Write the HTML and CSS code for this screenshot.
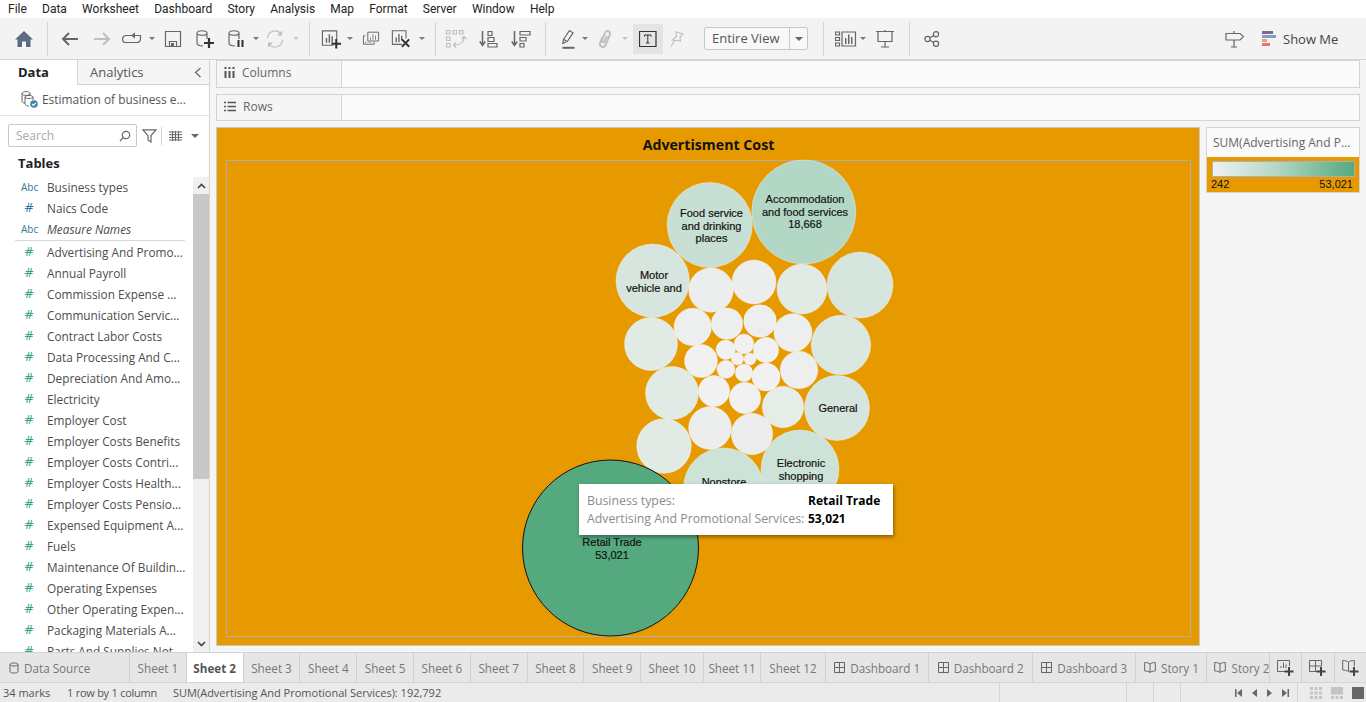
FILE: index.html
```html
<!DOCTYPE html>
<html lang="en">
<head>
    <meta charset="UTF-8">
    <title>Tableau - Sheet 2</title>
    <link rel="stylesheet" href="styles.css">
</head>
<body>
<div class="app">
    <nav class="menubar">
        <span>File</span><span>Data</span><span>Worksheet</span><span>Dashboard</span><span>Story</span><span>Analysis</span><span>Map</span><span>Format</span><span>Server</span><span>Window</span><span>Help</span>
    </nav>

    <div class="toolbar">
        <div class="tool"><svg width="20" height="18" viewBox="0 0 20 18"><path class="home" d="M10 1 L19 9.5 H16.5 V17 H12 V11.5 H8 V17 H3.5 V9.5 H1 Z"/></svg></div>
        <div class="tool"><i class="sep"></i></div>
        <div class="tool"><svg width="20" height="16" viewBox="0 0 20 16"><path class="ln2" d="M18 8 H3 M9 2 L3 8 L9 14"/></svg></div>
        <div class="tool"><svg width="20" height="16" viewBox="0 0 20 16"><path class="ln2 off" d="M2 8 H17 M11 2 L17 8 L11 14"/></svg></div>
        <div class="tool"><svg width="20" height="14" viewBox="0 0 20 14"><path class="ln" d="M10 3.5 H4 A3.5 3.5 0 0 0 4 10.5 H15 A3.5 3.5 0 0 0 18.5 7 V3.5 H13"/><path class="fill" d="M13 0.5 V6.5 L9 3.5 Z"/></svg></div>
        <div class="tool"><i class="caret"></i></div>
        <div class="tool"><svg width="18" height="18" viewBox="0 0 18 18"><path class="ln" d="M1.5 1.5 H16.5 V16.5 H1.5 Z M5.5 16.5 V11.5 H12.5 V16.5"/><path class="fill" d="M7 13 H10 V16 H7 Z"/></svg></div>
        <div class="tool"><svg width="20" height="20" viewBox="0 0 20 20"><path class="ln" d="M2 4 C2 1 12 1 12 4 V10 M2 4 C2 7 12 7 12 4 M2 4 V14 C2 16 5 17 8 17"/><path class="plus" d="M14 9 V19 M9 14 H19"/></svg></div>
        <div class="tool"><svg width="20" height="20" viewBox="0 0 20 20"><path class="ln" d="M2 4 C2 1 12 1 12 4 V10 M2 4 C2 7 12 7 12 4 M2 4 V14 C2 16 5 17 8 17"/><path class="bars" d="M11.5 11 V18 M15.5 11 V18"/></svg></div>
        <div class="tool"><i class="caret"></i></div>
        <div class="tool"><svg width="20" height="20" viewBox="0 0 20 20"><path class="ln off" d="M2.5 9 A7.5 7.5 0 0 1 16 5 M17.5 11 A7.5 7.5 0 0 1 4 15"/><path class="fill off" d="M17 1.5 V6.5 H12 Z M3 18.5 V13.5 H8 Z"/></svg></div>
        <div class="tool"><i class="caret off"></i></div>
        <div class="tool"><i class="sep"></i></div>
        <div class="tool tool-nudge"><svg width="21" height="20" viewBox="0 0 22 20"><path class="ln" d="M13 16.5 H1.5 V1.5 H16.5 V10"/><path class="fill" d="M5 9 H6.5 V14 H5 Z M8 5 H9.5 V14 H8 Z M11 7 H12.5 V14 H11 Z"/><path class="plus" d="M16 10 V20 M11 15 H21"/></svg></div>
        <div class="tool"><i class="caret"></i></div>
        <div class="tool"><svg width="18" height="16" viewBox="0 0 22 20"><path class="ln" d="M7 1.5 H20.5 V12.5 H7 Z M4 6 H1.5 V16.5 H15 V14"/><path class="fill" d="M10 8 H11 V11 H10 Z M13 4 H14 V11 H13 Z M16 6 H17 V11 H16 Z M4 13 H5 V15 H4 Z M7 14 H8 V15 H7 Z M10 14 H11 V15 H10 Z"/></svg></div>
        <div class="tool"><svg width="20" height="19" viewBox="0 0 22 20"><path class="ln" d="M12 16.5 H1.5 V1.5 H16.5 V10"/><path class="fill" d="M5 9 H6.5 V14 H5 Z M8 5 H9.5 V14 H8 Z M11 7 H12.5 V12 H11 Z"/><path class="cross" d="M12 11 L20 19 M20 11 L12 19"/></svg></div>
        <div class="tool"><i class="caret"></i></div>
        <div class="tool"><i class="sep"></i></div>
        <div class="tool"><svg width="22" height="20" viewBox="0 0 22 20"><path class="ln off" d="M1.5 1.5 H5 V5 H1.5 Z M8 1.5 H11.5 V5 H8 Z M14.5 1.5 H18 V5 H14.5 Z M1.5 8 H5 V11.5 H1.5 Z M1.5 14.5 H5 V18 H1.5 Z M19 8 C19 13 15 16 9 16 M11 13.5 L8.5 16 L11 18.5 M16.5 10 L19 7.5 L21.5 10"/></svg></div>
        <div class="tool"><svg width="20" height="18" viewBox="0 0 20 18"><path class="ln2 thin" d="M3.5 1 V15 M0.8 11.5 L3.5 15.5 L6.2 11.5"/><path class="ln" d="M9 1.5 H13 V5.5 H9 Z M9 7.5 H15 V11.5 H9 Z M9 13.5 H18 V17 H9 Z"/></svg></div>
        <div class="tool"><svg width="20" height="18" viewBox="0 0 20 18"><path class="ln2 thin" d="M3.5 1 V15 M0.8 11.5 L3.5 15.5 L6.2 11.5"/><path class="ln" d="M9 1.5 H19 V5 H9 Z M9 7.5 H15 V11 H9 Z M9 13.5 H13 V17 H9 Z"/></svg></div>
        <div class="tool"><i class="sep"></i></div>
        <div class="tool"><svg width="14" height="20" viewBox="0 0 14 20"><path class="ln" d="M5 13 L1.8 14.5 L2.5 10.5 L8.5 1.5 L12 3.8 L6 13 M3 10.5 L6 12.5"/><path class="fill" d="M1.5 17.8 H13.5 V19.8 H1.5 Z"/></svg></div>
        <div class="tool"><i class="caret"></i></div>
        <div class="tool"><svg width="14" height="20" viewBox="0 0 14 20"><path class="ln2 off" d="M4.5 8 L2 14 C1 18 6 19.5 7.5 16 L11.8 6 C13 2 8.5 0.5 7 4 L4 11.5 C3.5 13.5 5.5 14 6.5 12.5 L9 7"/></svg></div>
        <div class="tool"><i class="caret off"></i></div>
        <div></div>
        <div class="tool tool-on"><svg width="18" height="16" viewBox="0 0 18 16"><path class="box" d="M0.5 0.5 H17 V15.5 H0.5 Z"/><path class="tee" d="M5.5 5.5 V4 H12 V5.5 M8.8 4 V12 M7 12 H10.5"/></svg></div>
        <div class="tool"><svg width="14" height="16" viewBox="0 0 14 16"><path class="ln off" d="M6 0.8 L13 3 L10 6 L10.5 10 L2.5 9 L6.5 5.5 Z M4.5 9.5 L1 15.5"/></svg></div>
        <div></div>
        <div class="fit-select"><span class="fit-text">Entire View</span><span class="fit-arrow"><i class="caret dark"></i></span></div>
        <div class="tool"><i class="sep"></i></div>
        <div class="tool"><svg width="22" height="16" viewBox="0 0 22 16"><path class="ln" d="M0.5 1 H4.5 V4 H0.5 Z M0.5 6.5 H4.5 V9.5 H0.5 Z M0.5 12 H4.5 V15 H0.5 Z M7 1 H20.5 V15 H7 Z"/><path class="fill" d="M10 7 H11.5 V13 H10 Z M13 3.5 H14.5 V13 H13 Z M16 6 H17.5 V13 H16 Z"/></svg></div>
        <div class="tool"><i class="caret"></i></div>
        <div class="tool"><svg width="20" height="18" viewBox="0 0 20 18"><path class="ln" d="M1 1.5 H19 M3 1.5 V11.5 H17 V1.5 M10 0 V1.5 M10 11.5 V17 M6 17 H14"/></svg></div>
        <div class="tool"><i class="sep"></i></div>
        <div class="tool"><svg width="16" height="16" viewBox="0 0 16 16"><circle class="ln" cx="3.5" cy="8" r="2.6"/><circle class="ln" cx="12" cy="3.2" r="2.6"/><circle class="ln" cx="12" cy="12.8" r="2.6"/><path class="ln" d="M5.8 6.8 L9.7 4.5 M5.8 9.2 L9.7 11.5"/></svg></div>
        <div></div>
        <div class="tool"><svg width="20" height="18" viewBox="0 0 20 18"><path class="ln" d="M1 3.5 H15 L18.5 6.5 L15 10 H1 Z M9 3.5 V1 M9 10 V17 M6 17 H12"/></svg></div>
        <div class="show-me">
            <svg width="15" height="16" viewBox="0 0 15 16"><rect class="sm-1" x="0" y="0" width="11" height="3"/><rect class="sm-2" x="0" y="4" width="14" height="3"/><rect class="sm-3" x="0" y="8" width="5" height="3"/><rect class="sm-4" x="0" y="12" width="8" height="3"/></svg>
            <span>Show Me</span>
        </div>
    </div>

    <div class="main">
        <aside class="side">
            <div class="side-tabs">
                <div class="side-tab side-tab-on">Data</div>
                <div class="side-tab">Analytics<svg class="side-close" width="8" height="11" viewBox="0 0 8 11"><path class="ln" d="M6.5 1 L1.5 5.5 L6.5 10"/></svg></div>
            </div>
            <div class="source">
                <svg width="18" height="18" viewBox="0 0 18 18"><path class="ln thin-ln" d="M2 3.5 C2 1 10 1 10 3.5 V6 M2 3.5 C2 6 10 6 10 3.5 M2 3.5 V11 C2 12 3 13 5 13.2 M5 7 C5 5 13 5 13 7 V10 M5 7 C5 9 13 9 13 7 M5 7 V13.5 C5 15 7 16 9 16"/><circle class="check" cx="14" cy="14" r="3.8"/><path class="tick" d="M12.2 14 L13.5 15.3 L15.8 12.8"/></svg>
                <span>Estimation of business e...</span>
            </div>
            <div class="search-row">
                <div class="search"><span>Search</span><svg width="12" height="12" viewBox="0 0 12 12"><circle class="ln" cx="7" cy="5" r="3.7"/><path class="ln" d="M4.3 7.7 L1 11"/></svg></div>
                <svg class="filter" width="15" height="14" viewBox="0 0 15 14"><path class="ln" d="M0.8 0.8 H14 L9 6.5 V13 L6 11 V6.5 Z"/></svg>
                <i class="sep sep-small"></i>
                <svg width="13" height="10" viewBox="0 0 13 10"><path class="dash" d="M0 1 H13 M0 3.7 H13 M0 6.4 H13 M0 9 H13 M3.5 0 V10 M6.5 0 V10 M9.5 0 V10"/></svg>
                <i class="caret dark caret-list"></i>
            </div>
            <h3 class="tables">Tables</h3>
            <div class="fields">
                <ul class="field-list">
                    <li class="dim"><b>Abc</b>Business types</li>
                    <li class="dim"><b class="num">#</b>Naics Code</li>
                    <li class="dim last-dim"><b>Abc</b><em>Measure Names</em></li>
                    <li class="mea"><b class="num">#</b>Advertising And Promo...</li>
                    <li class="mea"><b class="num">#</b>Annual Payroll</li>
                    <li class="mea"><b class="num">#</b>Commission Expense ...</li>
                    <li class="mea"><b class="num">#</b>Communication Servic...</li>
                    <li class="mea"><b class="num">#</b>Contract Labor Costs</li>
                    <li class="mea"><b class="num">#</b>Data Processing And C...</li>
                    <li class="mea"><b class="num">#</b>Depreciation And Amo...</li>
                    <li class="mea"><b class="num">#</b>Electricity</li>
                    <li class="mea"><b class="num">#</b>Employer Cost</li>
                    <li class="mea"><b class="num">#</b>Employer Costs Benefits</li>
                    <li class="mea"><b class="num">#</b>Employer Costs Contri...</li>
                    <li class="mea"><b class="num">#</b>Employer Costs Health...</li>
                    <li class="mea"><b class="num">#</b>Employer Costs Pensio...</li>
                    <li class="mea"><b class="num">#</b>Expensed Equipment A...</li>
                    <li class="mea"><b class="num">#</b>Fuels</li>
                    <li class="mea"><b class="num">#</b>Maintenance Of Buildin...</li>
                    <li class="mea"><b class="num">#</b>Operating Expenses</li>
                    <li class="mea"><b class="num">#</b>Other Operating Expen...</li>
                    <li class="mea"><b class="num">#</b>Packaging Materials A...</li>
                    <li class="mea"><b class="num">#</b>Parts And Supplies Not...</li>
                </ul>
                <div class="scrollbar">
                    <div class="scroll-btn"><svg width="9" height="6" viewBox="0 0 9 6"><path class="chev" d="M1 5 L4.5 1.5 L8 5"/></svg></div>
                    <div class="scroll-thumb"></div>
                    <div class="scroll-btn scroll-btn-end"><svg width="9" height="6" viewBox="0 0 9 6"><path class="chev" d="M1 1 L4.5 4.5 L8 1"/></svg></div>
                </div>
            </div>
        </aside>

        <section class="content">
            <div class="shelf">
                <div class="shelf-label"><svg width="11" height="11" viewBox="0 0 11 11"><path class="shelf-ico" d="M1.5 0 V2 M1.5 4 V11 M5.5 0 V2 M5.5 4 V11 M9.5 0 V2 M9.5 4 V11"/></svg>Columns</div>
            </div>
            <div class="shelf">
                <div class="shelf-label"><svg width="12" height="11" viewBox="0 0 12 11"><path class="shelf-ico thin-ico" d="M0 1.5 H2 M3.5 1.5 H12 M0 5.5 H2 M3.5 5.5 H12 M0 9.5 H2 M3.5 9.5 H12"/></svg>Rows</div>
            </div>
            <div class="view-row">
                <div class="worksheet">
                    <h2 class="ws-title">Advertisment Cost</h2>
                    <div class="pane">
                        <svg class="bubbles" viewBox="227 161 963 475">
                            <circle class="s1" cx="803.8" cy="212" r="52"/>
                            <circle class="s2" cx="709.7" cy="225" r="42.6"/>
                            <circle class="s4" cx="652.7" cy="280.7" r="36.7"/>
                            <circle class="s8" cx="711" cy="290" r="22.3"/>
                            <circle class="s8" cx="754" cy="282" r="22"/>
                            <circle class="s6" cx="802" cy="289" r="25"/>
                            <circle class="s4" cx="860" cy="285" r="33"/>
                            <circle class="s6" cx="651" cy="344" r="26.5"/>
                            <circle class="s9" cx="692.7" cy="327" r="18.7"/>
                            <circle class="s9" cx="727" cy="323.7" r="15.7"/>
                            <circle class="s9" cx="760" cy="321" r="16.3"/>
                            <circle class="s9" cx="793" cy="332.7" r="19"/>
                            <circle class="s5" cx="841" cy="345" r="29.7"/>
                            <circle class="s10" cx="725.7" cy="349.7" r="9.7"/>
                            <circle class="s10" cx="744" cy="344" r="10"/>
                            <circle class="s10" cx="766" cy="350" r="12.7"/>
                            <circle class="s10" cx="737.5" cy="358.8" r="6.2"/>
                            <circle class="s10" cx="750" cy="359" r="6"/>
                            <circle class="s10" cx="726" cy="369.3" r="9"/>
                            <circle class="s10" cx="744" cy="372.8" r="8.8"/>
                            <circle class="s10" cx="766" cy="377" r="14"/>
                            <circle class="s10" cx="701" cy="361" r="16.5"/>
                            <circle class="s9" cx="799" cy="370" r="18.8"/>
                            <circle class="s6" cx="672" cy="393" r="26.5"/>
                            <circle class="s10" cx="714" cy="391" r="15.6"/>
                            <circle class="s10" cx="745" cy="398" r="15.7"/>
                            <circle class="s7" cx="783" cy="407" r="20.7"/>
                            <circle class="s4" cx="837" cy="408" r="32.5"/>
                            <circle class="s8" cx="710" cy="428" r="21.4"/>
                            <circle class="s8" cx="752" cy="434" r="20.7"/>
                            <circle class="s6" cx="664" cy="446" r="27.3"/>
                            <circle class="s3" cx="723.5" cy="488" r="40"/>
                            <circle class="s3" cx="800" cy="469" r="39"/>
                            <circle class="s0" cx="610.5" cy="548" r="88"/>
                            <text x="805" y="203">Accommodation</text>
                            <text x="805" y="216">and food services</text>
                            <text x="805" y="228">18,668</text>
                            <text x="711.5" y="217">Food service</text>
                            <text x="711.5" y="230">and drinking</text>
                            <text x="711.5" y="242">places</text>
                            <text x="654" y="279">Motor</text>
                            <text x="654" y="292">vehicle and</text>
                            <text x="838" y="412">General</text>
                            <text x="724" y="486">Nonstore</text>
                            <text x="801" y="467">Electronic</text>
                            <text x="801" y="480">shopping</text>
                            <text x="612" y="546">Retail Trade</text>
                            <text x="612" y="559">53,021</text>
                        </svg>
                    </div>
                    <div class="tooltip">
                        <span class="tip-key">Business types:</span><span class="tip-val">Retail Trade</span>
                        <span class="tip-key">Advertising And Promotional Services:</span><span class="tip-val">53,021</span>
                    </div>
                </div>
                <div class="legend">
                    <div class="legend-title">SUM(Advertising And P...</div>
                    <div class="legend-body">
                        <div class="legend-ramp"></div>
                        <div class="legend-scale"><span>242</span><span>53,021</span></div>
                    </div>
                </div>
            </div>
        </section>
    </div>

    <div class="tabs">
        <div class="tab tab-source"><svg width="10" height="12" viewBox="0 0 10 12"><path class="tab-ln" d="M1 2.5 C1 0.5 9 0.5 9 2.5 V9.5 C9 11.5 1 11.5 1 9.5 Z M1 2.5 C1 4.5 9 4.5 9 2.5"/></svg>Data Source</div>
        <div class="tab">Sheet 1</div>
        <div class="tab tab-on">Sheet 2</div>
        <div class="tab">Sheet 3</div>
        <div class="tab">Sheet 4</div>
        <div class="tab">Sheet 5</div>
        <div class="tab">Sheet 6</div>
        <div class="tab">Sheet 7</div>
        <div class="tab">Sheet 8</div>
        <div class="tab">Sheet 9</div>
        <div class="tab tab-two">Sheet 10</div>
        <div class="tab">Sheet 11</div>
        <div class="tab tab-twelve">Sheet 12</div>
        <div class="tab tab-dash"><svg width="11" height="11" viewBox="0 0 11 11"><path class="tab-ln" d="M0.5 0.5 H10.5 V10.5 H0.5 Z M5.5 0.5 V10.5 M0.5 5.5 H10.5"/></svg>Dashboard 1</div>
        <div class="tab tab-dash"><svg width="11" height="11" viewBox="0 0 11 11"><path class="tab-ln" d="M0.5 0.5 H10.5 V10.5 H0.5 Z M5.5 0.5 V10.5 M0.5 5.5 H10.5"/></svg>Dashboard 2</div>
        <div class="tab tab-dash"><svg width="11" height="11" viewBox="0 0 11 11"><path class="tab-ln" d="M0.5 0.5 H10.5 V10.5 H0.5 Z M5.5 0.5 V10.5 M0.5 5.5 H10.5"/></svg>Dashboard 3</div>
        <div class="tab tab-story"><svg width="12" height="11" viewBox="0 0 12 11"><path class="tab-ln" d="M6 2 C5 1 3 0.5 0.7 0.5 V9 C3 9 5 9.5 6 10.5 C7 9.5 9 9 11.3 9 V0.5 C9 0.5 7 1 6 2 Z M6 2 V10.5"/></svg>Story 1</div>
        <div class="tab tab-story tab-cut"><svg width="12" height="11" viewBox="0 0 12 11"><path class="tab-ln" d="M6 2 C5 1 3 0.5 0.7 0.5 V9 C3 9 5 9.5 6 10.5 C7 9.5 9 9 11.3 9 V0.5 C9 0.5 7 1 6 2 Z M6 2 V10.5"/></svg>Story 2</div>
        <div class="tab-add"><svg width="17" height="16" viewBox="0 0 17 16"><path class="tab-ln" d="M9 11.5 H0.5 V0.5 H12.5 V6"/><path class="tab-ln" d="M4 8 V6 M6.5 8 V2.5 M9 8 V4.5"/><path class="tab-plus" d="M12 7 V16 M7.5 11.5 H16.5"/></svg></div>
        <div class="tab-add"><svg width="17" height="16" viewBox="0 0 17 16"><path class="tab-ln" d="M9 11.5 H0.5 V0.5 H12.5 V6 M6.5 0.5 V11.5 M0.5 6 H12.5"/><path class="tab-plus" d="M12 7 V16 M7.5 11.5 H16.5"/></svg></div>
        <div class="tab-add"><svg width="17" height="16" viewBox="0 0 17 16"><path class="tab-ln" d="M6.5 2 C5 1 3 0.5 0.7 0.5 V10 C3 10 5 10.5 6.5 11.5 M6.5 2 C8 1 10 0.5 12.3 0.5 V6 M6.5 2 V11.5"/><path class="tab-plus" d="M12 7 V16 M7.5 11.5 H16.5"/></svg></div>
    </div>

    <footer class="status">
        <span class="st-marks">34 marks</span>
        <span class="st-rows">1 row by 1 column</span>
        <span class="st-sum">SUM(Advertising And Promotional Services): 192,792</span>
        <span class="st-cell st-a"></span>
        <span class="st-cell st-b"></span>
        <span class="st-cell st-c"></span>
        <span class="st-cell st-d"></span>
        <div class="st-nav">
            <svg width="7" height="8" viewBox="0 0 7 8"><path class="nav" d="M0 0 H1.5 V8 H0 Z M7 0 V8 L2 4 Z"/></svg>
            <svg width="5" height="8" viewBox="0 0 5 8"><path class="nav" d="M5 0 V8 L0 4 Z"/></svg>
            <svg width="5" height="8" viewBox="0 0 5 8"><path class="nav" d="M0 0 V8 L5 4 Z"/></svg>
            <svg width="7" height="8" viewBox="0 0 7 8"><path class="nav" d="M5.5 0 H7 V8 H5.5 Z M0 0 V8 L5 4 Z"/></svg>
        </div>
        <div class="st-views">
            <svg width="12" height="12" viewBox="0 0 12 12"><path class="view-grid" d="M0 0 H3 V3 H0 Z M4.5 0 H7.5 V3 H4.5 Z M9 0 H12 V3 H9 Z M0 4.5 H3 V7.5 H0 Z M4.5 4.5 H7.5 V7.5 H4.5 Z M9 4.5 H12 V7.5 H9 Z M0 9 H3 V12 H0 Z M4.5 9 H7.5 V12 H4.5 Z M9 9 H12 V12 H9 Z"/></svg>
            <svg width="12" height="12" viewBox="0 0 12 12"><path class="view-grid" d="M0 0 H12 V7.5 H0 Z M0 9 H3 V12 H0 Z M4.5 9 H7.5 V12 H4.5 Z M9 9 H12 V12 H9 Z"/></svg>
            <svg width="12" height="12" viewBox="0 0 12 12"><path class="view-full" d="M0 0 H12 V12 H0 Z"/></svg>
        </div>
    </footer>
</div>
</body>
</html>
```

FILE: styles.css
```css
* {
  box-sizing: border-box;
}

html, body {
  margin: 0;
  height: 100%;
  overflow: hidden;
}

body {
  font-family: "Open Sans", "Liberation Sans", sans-serif;
  font-size: 12px;
  color: #555;
  background-color: #f5f5f5;
}

.app {
  display: flex;
  flex-direction: column;
  width: 1366px;
  height: 702px;
}

/* menu */
.menubar {
  display: flex;
  align-items: center;
  gap: 15.2px;
  height: 18px;
  padding-left: 8px;
  background-color: #fff;
  color: #222;
  font-family: Roboto, "Liberation Sans", sans-serif;
  font-size: 12px;
}

/* toolbar */
.toolbar {
  display: grid;
  grid-template-columns: 32px 14px 32px 32px 28px 12px 30px 34px 30px 8px 30px 12px 14px 28px 12px 30px 30px 12px 14px 28px 38px 26px 22px 24px 10px 30px 10px 3px 30px 28px 13px 104px 30px 16px 18px 26px 22px 24px 1fr 44px 109px;
  align-items: center;
  height: 42px;
  padding-left: 8px;
  background-color: #f3f3f3;
  border-bottom: 1px solid #d4d4d4;
}

.tool {
  display: flex;
  align-items: center;
  justify-content: center;
  height: 30px;
}

.tool-on {
  background-color: #e4e4e4;
}

.tool-nudge {
  padding-left: 2px;
}

.sep {
  display: block;
  width: 1px;
  height: 34px;
  background-color: #d4d4d4;
}

.caret {
  display: block;
  width: 0;
  height: 0;
  border-left: 3px solid transparent;
  border-right: 3px solid transparent;
  border-top: 3px solid #777;
}

.caret.off {
  border-top-color: #c4c4c4;
}

.caret.dark {
  border-left-width: 4px;
  border-right-width: 4px;
  border-top-width: 4px;
  border-top-color: #666;
}

svg {
  display: block;
  flex: none;
}

.ln, .ln2, .box, .tee, .plus, .bars, .cross, .dash, .chev, .shelf-ico, .tab-ln, .tab-plus {
  fill: none;
}

.ln {
  stroke: #666;
  stroke-width: 1.2;
}

.ln2 {
  stroke: #666;
  stroke-width: 2;
}

.ln2.thin {
  stroke-width: 1.5;
}

.ln.thin-ln {
  stroke-width: 1;
}

.ln.off, .ln2.off {
  stroke: #c0c0c0;
}

.fill {
  fill: #666;
}

.fill.off {
  fill: #c0c0c0;
}

.home {
  fill: #5d6b7e;
}

.plus {
  stroke: #333;
  stroke-width: 2.2;
}

.bars {
  stroke: #333;
  stroke-width: 2;
}

.cross {
  stroke: #333;
  stroke-width: 2.2;
}

.box {
  stroke: #333;
  stroke-width: 1.2;
}

.tee {
  stroke: #333;
  stroke-width: 1;
}

.fit-select {
  display: flex;
  height: 23px;
  background-color: #f8f8f8;
  border: 1px solid #c8c8c8;
  border-radius: 2px;
  font-size: 13px;
  color: #555;
}

.fit-text {
  flex: 1;
  padding-left: 7px;
  line-height: 20px;
}

.fit-arrow {
  display: flex;
  align-items: center;
  justify-content: center;
  width: 18px;
  border-left: 1px solid #c8c8c8;
}

.show-me {
  display: flex;
  align-items: center;
  gap: 6px;
  padding-left: 5px;
  font-size: 13px;
  color: #444;
}

.sm-1 { fill: #7b6a94; }
.sm-2 { fill: #7f9fc6; }
.sm-3 { fill: #eda36f; }
.sm-4 { fill: #ee7183; }

/* main area */
.main {
  display: flex;
  flex: 1;
  min-height: 0;
}

.side {
  display: flex;
  flex-direction: column;
  flex: none;
  width: 210px;
  background-color: #fff;
  border-right: 1px solid #d4d4d4;
}

.side-tabs {
  display: flex;
  flex: none;
  height: 25px;
}

.side-tab {
  position: relative;
  flex: 1;
  padding-left: 12px;
  line-height: 24px;
  font-size: 13px;
  color: #555;
  background-color: #f5f5f5;
  border-left: 1px solid #d4d4d4;
  border-bottom: 1px solid #d4d4d4;
}

.side-tab-on {
  flex: none;
  width: 77px;
  padding-left: 18px;
  font-weight: 700;
  color: #222;
  background-color: #fff;
  border: none;
}

.side-close {
  position: absolute;
  right: 7px;
  top: 7px;
}

.source {
  display: flex;
  flex: none;
  align-items: center;
  gap: 4px;
  height: 31px;
  padding: 0 0 2px 20px;
  font-size: 11.9px;
  border-bottom: 1px solid #e4e4e4;
}

.search-row {
  display: flex;
  flex: none;
  align-items: center;
  height: 23px;
  margin-top: 8px;
  padding-left: 8px;
}

.search {
  display: flex;
  align-items: center;
  justify-content: space-between;
  width: 129px;
  height: 23px;
  padding: 0 5px 0 7px;
  border: 1px solid #c8c8c8;
  border-radius: 2px;
  color: #aaa;
}

.filter {
  margin-left: 5px;
}

.sep-small {
  height: 18px;
  margin: 0 7px 0 4px;
}

.dash {
  stroke: #666;
  stroke-width: 1;
}

.caret-list {
  margin-left: 9px;
}

.tables {
  flex: none;
  height: 20px;
  margin: 6px 0 4px 18px;
  font-size: 13px;
  line-height: 20px;
  font-weight: 700;
  color: #222;
}

.fields {
  position: relative;
  flex: 1;
  min-height: 0;
  overflow: hidden;
}

.field-list {
  margin: 0;
  padding: 0;
  list-style: none;
}

.field-list li {
  display: flex;
  align-items: center;
  height: 21px;
  padding-left: 20px;
  font-size: 11.8px;
  white-space: nowrap;
  color: #4d4d4d;
}

.field-list .dim {
  padding-bottom: 1px;
}

.field-list b {
  flex: none;
  width: 27px;
  padding-left: 1px;
  font-family: "Open Sans", "Liberation Sans", sans-serif;
  font-size: 10px;
  font-weight: 400;
  color: #2d7a9c;
}

.field-list b.num {
  padding-left: 4px;
  font-family: "DejaVu Sans", sans-serif;
  font-size: 12px;
  color: #2d7a9c;
}

.field-list .mea b.num {
  color: #35a47c;
}

.field-list .last-dim {
  box-sizing: content-box;
  height: 20px;
  margin: 0 24px 0 15px;
  padding-left: 5px;
  border-bottom: 1px solid #d8d8d8;
}

/* scrollbar overlays the end of the field list */
.scrollbar {
  position: absolute;
  top: 0;
  right: 0;
  display: flex;
  flex-direction: column;
  width: 16px;
  height: 475px;
  background-color: #f0f0f0;
}

.scroll-btn {
  display: flex;
  flex: none;
  align-items: center;
  justify-content: center;
  height: 17px;
}

.scroll-btn-end {
  margin-top: auto;
}

.chev {
  stroke: #444;
  stroke-width: 1.6;
}

.scroll-thumb {
  flex: none;
  height: 285px;
  background-color: #c8c8c8;
}

.content {
  display: flex;
  flex-direction: column;
  flex: 1;
  min-width: 0;
  padding: 0 6px 6px 6px;
}

.shelf {
  display: flex;
  flex: none;
  height: 27.5px;
  margin-bottom: 6px;
  background-color: #fafafa;
  border: 1px solid #d4d4d4;
}

.shelf-label {
  display: flex;
  align-items: center;
  gap: 7px;
  width: 125px;
  padding: 0 0 2px 7px;
  background-color: #f5f5f5;
  border-right: 1px solid #d4d4d4;
  color: #666;
}

.shelf-ico {
  stroke: #555;
  stroke-width: 2;
}

.shelf-ico.thin-ico {
  stroke-width: 1.5;
}

.view-row {
  display: flex;
  flex: 1;
  gap: 6px;
  min-height: 0;
}

.worksheet {
  position: relative;
  display: flex;
  flex-direction: column;
  flex: none;
  width: 984px;
  height: 519px;
  padding: 0 8px 8px 9px;
  background-color: #e69a00;
  border: 1px solid #c8c8c8;
}

.ws-title {
  flex: none;
  margin: 0;
  height: 32px;
  font-size: 14.2px;
  line-height: 33px;
  font-weight: 700;
  color: #111;
  text-align: center;
}

.pane {
  flex: 1;
  min-height: 0;
  border: 1px solid #aeaeae;
}

.bubbles {
  width: 100%;
  height: 100%;
  overflow: visible;
}

.bubbles circle {
  stroke: #fff;
  stroke-opacity: 0.35;
  stroke-width: 1;
}

.bubbles .s0 {
  fill: #55a97f;
  stroke: #111;
  stroke-opacity: 1;
}

.s1 { fill: #b3d7c5; }
.s2 { fill: #c8e0d4; }
.s3 { fill: #cde3d7; }
.s4 { fill: #d6e6de; }
.s5 { fill: #dbe8e1; }
.s6 { fill: #e1eae5; }
.s7 { fill: #e6ece8; }
.s8 { fill: #ebeeec; }
.s9 { fill: #edefee; }
.s10 { fill: #f0f1f0; }

.bubbles text {
  font-family: "Liberation Sans", Arial, sans-serif;
  font-size: 11px;
  fill: #111;
  stroke: #111;
  stroke-width: 0.2;
  text-anchor: middle;
}

.tooltip {
  position: absolute;
  left: 362px;
  top: 356px;
  display: grid;
  grid-template-columns: auto auto;
  column-gap: 3px;
  width: 314px;
  height: 51px;
  padding: 7.5px 12px 7px 8px;
  background-color: #fff;
  box-shadow: 1px 2px 4px rgba(0, 0, 0, 0.4);
  line-height: 18px;
}

.tip-key {
  font-size: 12.3px;
  color: #8c8c8c;
}

.tip-val {
  font-weight: 700;
  color: #000;
}

.legend {
  flex: 1;
  height: 66px;
  background-color: #fafafa;
  border: 1px solid #d4d4d4;
}

.legend-title {
  height: 29px;
  padding-left: 6px;
  line-height: 29px;
  color: #666;
  white-space: nowrap;
}

.legend-body {
  height: 35px;
  padding: 4px 4px 0 5px;
  background-color: #e69a00;
}

.legend-ramp {
  height: 16px;
  background: linear-gradient(to right, #f0f1f0, #b3d7c5 45%, #55a97f);
  border: 1px solid #aeaeae;
}

.legend-scale {
  display: flex;
  justify-content: space-between;
  margin: 1px 2px 0 -1px;
  font-family: "Liberation Sans", Arial, sans-serif;
  font-size: 11px;
  line-height: 13px;
  color: #111;
}

/* sheet tabs */
.tabs {
  display: flex;
  flex: none;
  height: 31px;
  background-color: #e6e6e6;
  border-top: 1px solid #d4d4d4;
  border-bottom: 1px solid #d4d4d4;
  font-size: 11.7px;
  overflow: hidden;
}

.tab {
  display: flex;
  flex: none;
  align-items: center;
  justify-content: center;
  gap: 5px;
  width: 56.8px;
  border-right: 1px solid #d0d0d0;
  color: #777;
  white-space: nowrap;
  overflow: hidden;
}

.tab-source {
  justify-content: flex-start;
  width: 130px;
  padding-left: 9px;
}

.tab-on {
  background-color: #fff;
  font-weight: 700;
  color: #555;
}

.tab-two {
  width: 63px;
}

.tab-twelve {
  width: 65px;
}

.tab-dash {
  width: 103.5px;
}

.tab-story {
  width: 71px;
}

.tab-cut {
  justify-content: flex-start;
  width: 61.5px;
  padding-left: 7px;
  border-right: none;
}

.tab-add {
  display: flex;
  flex: none;
  align-items: center;
  justify-content: center;
  width: 32.3px;
  border-left: 1px solid #d0d0d0;
}

.tab-ln {
  stroke: #666;
  stroke-width: 1;
}

.tab-plus {
  stroke: #444;
  stroke-width: 2;
}

/* status bar */
.status {
  display: flex;
  flex: none;
  align-items: center;
  height: 19px;
  background-color: #ebebeb;
  font-size: 11px;
  color: #555;
}

.status span {
  flex: none;
  white-space: nowrap;
}

.st-marks {
  width: 67px;
  padding-left: 3px;
}

.st-rows {
  width: 106px;
  letter-spacing: -0.25px;
}

.st-sum {
  width: 826px;
}

.st-cell {
  height: 19px;
  border-left: 1px solid #d4d4d4;
}

.st-a {
  width: 127px;
}

.st-b,
.st-c {
  width: 27px;
}

.st-d {
  width: 47px;
}

.st-nav {
  display: flex;
  align-items: center;
  justify-content: space-between;
  width: 71px;
  height: 19px;
  padding: 0 8px;
  border-right: 1px solid #d4d4d4;
}

.st-views {
  display: flex;
  align-items: center;
  gap: 9px;
  padding-left: 12px;
}

.nav {
  fill: #666;
}

.view-grid {
  fill: #c4c4c4;
}

.view-full {
  fill: #666;
}

.check {
  fill: #3f88a8;
}

.tick {
  fill: none;
  stroke: #fff;
  stroke-width: 1.2;
}
```
